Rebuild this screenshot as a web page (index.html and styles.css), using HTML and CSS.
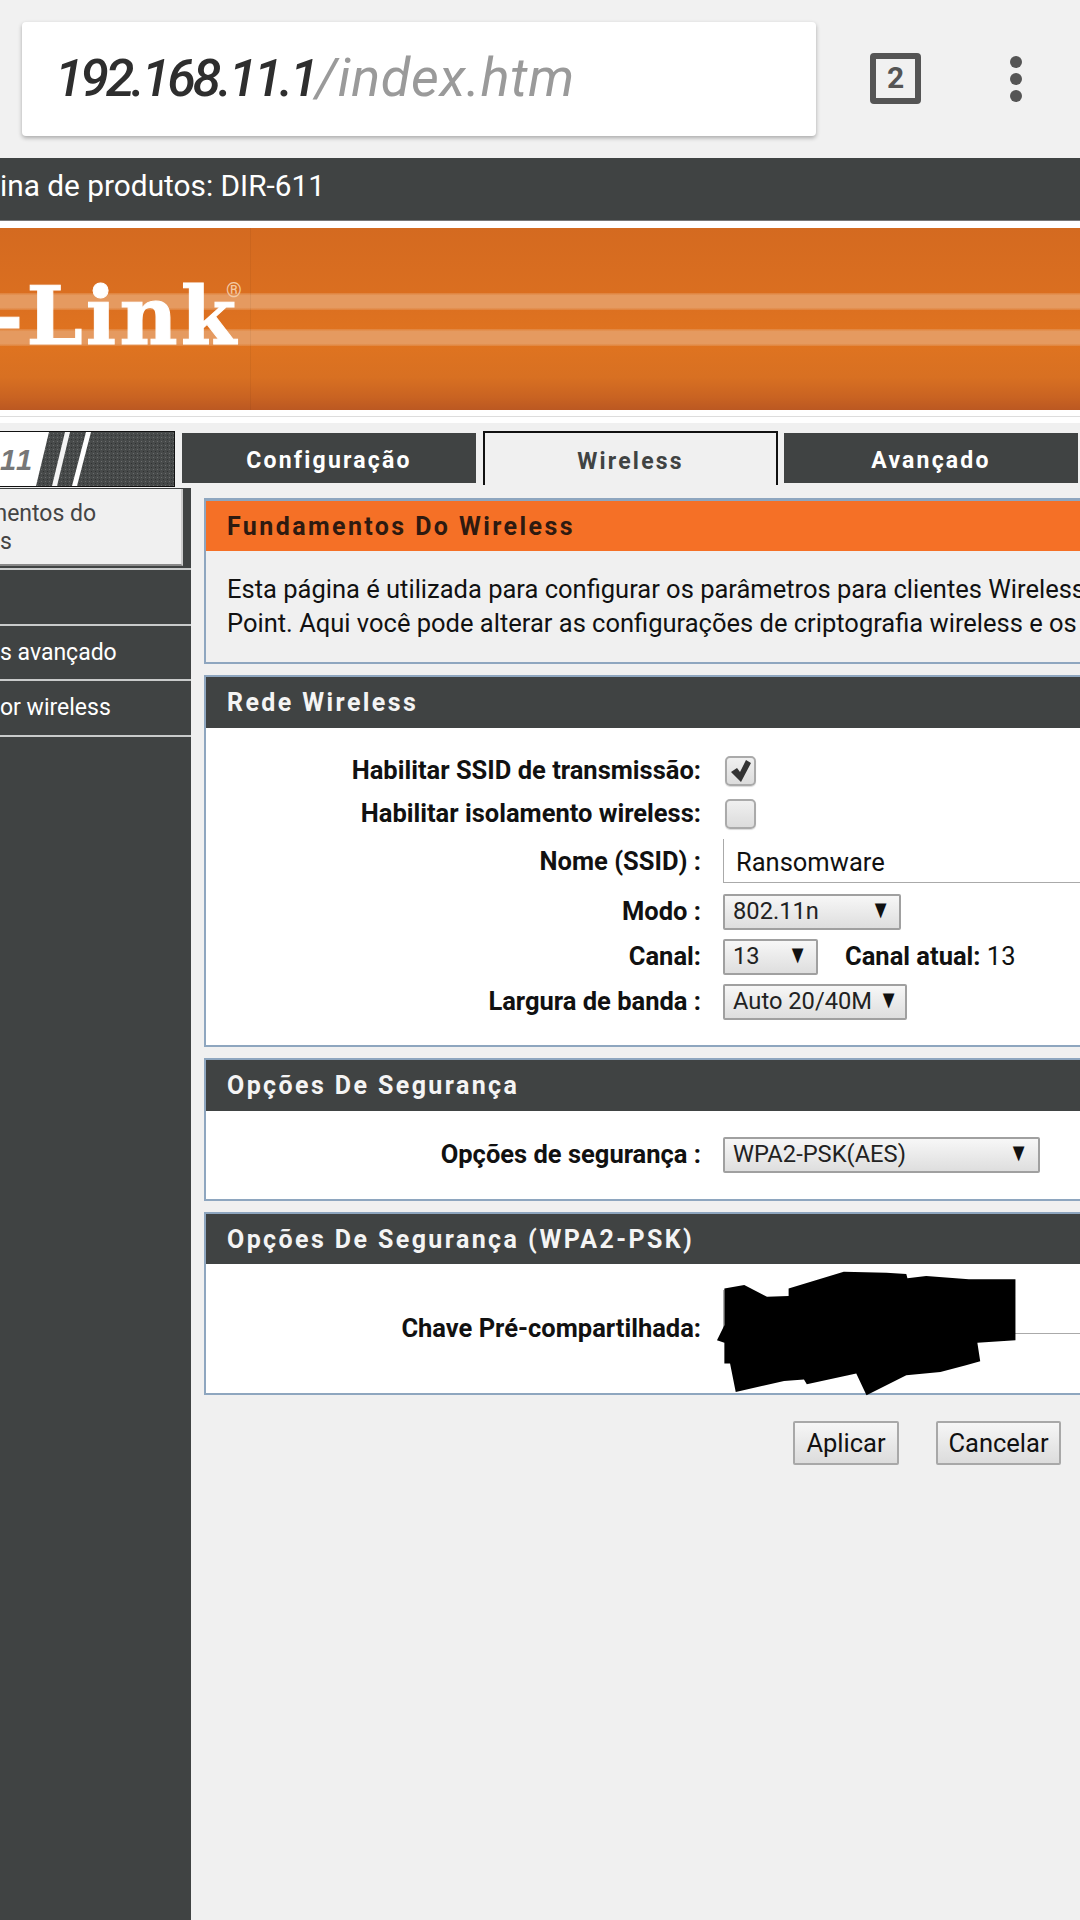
FILE: index.html
```html
<!DOCTYPE html>
<html lang="pt">
<head>
<meta charset="utf-8">
<title>192.168.11.1/index.htm</title>
<link rel="stylesheet" href="styles.css">
</head>
<body>
<header class="chrome">
  <div class="urlbox"><span class="host">192.168.11.1</span><span class="path">/index.htm</span></div>
  <div class="tabcount">2</div>
  <div class="dots"><i></i><i></i><i></i></div>
</header>
<div class="product"><span class="product-text">ina de produtos: DIR-611</span></div>
<div class="banner">
  <div class="orange">
    <div class="stripe stripe-a"></div>
    <div class="stripe stripe-b"></div>
    <div class="divider"></div>
    <div class="logo">-Link</div>
    <div class="reg">®</div>
  </div>
  <div class="rule"></div>
</div>
<nav class="tabs">
  <div class="tile">
    <svg class="tile-art" width="174" height="54" viewBox="0 0 174 54">
      <defs>
        <pattern id="grain" width="4" height="4" patternUnits="userSpaceOnUse">
          <rect width="4" height="4" fill="#474a4a"/>
          <rect width="1" height="1" x="1" y="1" fill="#6a6c6c"/>
          <rect width="1" height="1" x="3" y="3" fill="#2f3131"/>
        </pattern>
      </defs>
      <rect width="174" height="54" fill="url(#grain)"/>
      <polygon points="0,0 49,0 36,54 0,54" fill="#fff"/>
      <polygon points="65,0 70,0 57,54 52,54" fill="#f4f4f4"/>
      <polygon points="86,0 91,0 77,54 72,54" fill="#fff"/>
    </svg>
    <span class="tile-text">11</span>
  </div>
  <div class="tab">Configuração</div>
  <div class="tab tab-active">Wireless</div>
  <div class="tab">Avançado</div>
</nav>
<main class="main">
  <aside class="sidebar">
    <div class="side-item side-active"><span class="side-text">mentos do<br>s</span></div>
    <div class="side-item"></div>
    <div class="side-item"><span class="side-text">s avançado</span></div>
    <div class="side-item"><span class="side-text">or wireless</span></div>
  </aside>
  <div class="content">
    <section class="panel panel-intro">
      <h2 class="panel-head head-orange">Fundamentos Do Wireless</h2>
      <p class="intro">Esta página é utilizada para configurar os parâmetros para clientes Wireless<br>Point. Aqui você pode alterar as configurações de criptografia wireless e os</p>
    </section>
    <section class="panel">
      <h2 class="panel-head">Rede Wireless</h2>
      <div class="panel-body body-rede">
        <div class="row row-check"><label class="label">Habilitar SSID de transmissão:</label>
          <span class="check"><svg width="22" height="24" viewBox="0 0 22 24"><path d="M1 13l6-4 3 4 6-12 5 3-10 19z" fill="#333"/></svg></span></div>
        <div class="row row-check"><label class="label">Habilitar isolamento wireless:</label><span class="check"></span></div>
        <div class="row row-input"><label class="label">Nome (SSID) :</label><div class="textinput">Ransomware</div></div>
        <div class="row"><label class="label">Modo :</label><div class="select sel-modo"><span>802.11n</span><span class="arrow">▼</span></div></div>
        <div class="row"><label class="label">Canal:</label><div class="select sel-canal"><span>13</span><span class="arrow">▼</span></div>
          <span class="current"><b>Canal atual:</b> 13</span></div>
        <div class="row"><label class="label">Largura de banda :</label><div class="select sel-banda"><span>Auto 20/40M</span><span class="arrow">▼</span></div></div>
      </div>
    </section>
    <section class="panel">
      <h2 class="panel-head">Opções De Segurança</h2>
      <div class="panel-body">
        <div class="row"><label class="label">Opções de segurança :</label><div class="select sel-seg"><span>WPA2-PSK(AES)</span><span class="arrow">▼</span></div></div>
      </div>
    </section>
    <section class="panel">
      <h2 class="panel-head head-short">Opções De Segurança (WPA2-PSK)</h2>
      <div class="panel-body body-key">
        <div class="row row-key"><label class="label">Chave Pré-compartilhada:</label><div class="textinput"></div>
          <svg class="redact" width="307" height="127" viewBox="920 660 540 380" preserveAspectRatio="none"><polygon points="940,715 975,705 1015,740 1053,738 1053,715 1150,665 1225,668 1260,672 1262,685 1295,678 1370,688 1452,688 1452,870 1385,878 1390,933 1365,945 1320,965 1260,975 1190,1035 1172,970 1085,1002 1080,988 1045,992 960,1025 950,940 940,940 940,878 927,870 940,825"/></svg>
        </div>
      </div>
    </section>
    <div class="actions"><button class="btn btn-apply">Aplicar</button><button class="btn btn-cancel">Cancelar</button></div>
  </div>
</main>
</body>
</html>
```
FILE: styles.css
```css
* { box-sizing: border-box; }
html, body { margin: 0; padding: 0; }
body { width: 1080px; height: 1920px; overflow: hidden; background: #f0f0f0; font-family: Roboto, "Liberation Sans", sans-serif; color: #111; }

.chrome { height: 158px; background: #f1f1f1; padding: 22px 0 0 22px; display: flex; align-items: flex-start; }
.urlbox { width: 794px; height: 114px; background: #fff; border-radius: 4px; box-shadow: 0 2px 4px rgba(0,0,0,.3); padding: 0 0 0 33px; font-style: italic; font-size: 52px; line-height: 112px; white-space: nowrap; }
.host { color: #2e2e2e; font-weight: 500; letter-spacing: -3.3px; }
.path { color: #9a9a9a; font-weight: 400; font-size: 54px; letter-spacing: .7px; }
.tabcount { width: 51px; height: 51px; margin: 31px 0 0 54px; border: 6px solid #555; border-radius: 4px; color: #555; font-size: 30px; font-weight: 700; text-align: center; line-height: 38px; }
.dots { margin: 34px 0 0 89px; display: flex; flex-direction: column; gap: 5px; }
.dots i { display: block; width: 12px; height: 12px; border-radius: 50%; background: #555; }

.product { height: 63px; background: #404343; color: #fff; white-space: nowrap; border-bottom: 1px solid #777; }
.product-text { display: block; font-size: 29.8px; line-height: 56px; }

.banner { height: 202px; background: #fff; padding-top: 7px; }
.orange { position: relative; height: 182px; overflow: hidden; background: linear-gradient(#d46a20 0, #db6f20 40%, #e07420 62%, #d87022 82%, #c96322 93%, #bb5822 100%); }
.rule { height: 1px; margin-top: 6px; background: #ddd; }
.stripe { position: absolute; left: 0; right: 0; height: 17px; background: linear-gradient(rgba(229,154,96,.4), #e59a60 15%, #e59a60 85%, rgba(229,154,96,.4)); }
.stripe-a { top: 65px; }
.stripe-b { top: 101px; }
.divider { position: absolute; left: 250px; top: 0; bottom: 0; width: 1px; background: rgba(0,0,0,.05); }
.logo { position: absolute; left: -10px; top: 28px; font-family: "DejaVu Serif", serif; font-weight: 700; font-size: 80px; line-height: 120px; color: #fff; white-space: nowrap; letter-spacing: 3.2px; -webkit-text-stroke: 1px #fff; }
.reg { position: absolute; left: 226px; top: 52px; font-size: 20px; line-height: 20px; color: #f3c9a5; }

.tabs { display: flex; align-items: flex-start; height: 57px; margin-top: 8px; }
.tile { position: relative; width: 175px; height: 56px; border: 1px solid #111; border-left: 0; overflow: hidden; flex: none; }
.tile-art { display: block; }
.tile-text { position: absolute; left: 0; top: 12px; font-family: "Liberation Sans", sans-serif; font-style: italic; font-weight: 700; font-size: 29px; letter-spacing: 2px; color: #777; }
.tab { width: 294px; height: 50px; padding-top: 3px; margin: 2px 0 0 7px; flex: none; background: #404343; color: #fff; font-weight: 700; font-size: 23px; letter-spacing: 2.2px; text-align: center; line-height: 50px; }
.tab-active { width: 295px; height: 54px; padding-top: 3px; margin: 0 0 0 7px; background: #f0f0f0; color: #404343; border: 2px solid #111; border-bottom: 0; line-height: 52px; }
.tab:last-child { margin-left: 6px; }

.main { display: flex; align-items: flex-start; height: 1432px; }
.sidebar { width: 191px; height: 100%; flex: none; background: #404343; overflow: hidden; }
.side-item { height: 56px; border-bottom: 2px solid #c9cbcb; color: #fff; font-size: 23px; line-height: 54px; white-space: nowrap; }
.side-item:nth-child(3) { height: 55px; }
.side-text { display: block; }
.side-active { height: 82px; padding: 1px 8px 2px 0; }
.side-active .side-text { height: 77px; padding-top: 11px; background: #f0f0f0; color: #444; line-height: 28px; text-indent: -13px; border-bottom: 2px solid #888; border-right: 2px solid #ccc; }

.content { width: 900px; flex: none; margin-left: 13px; padding-top: 10px; overflow: hidden; }
.panel { border: 2px solid #8ea6bf; border-right: 0; background: #fff; margin-bottom: 11px; }
.panel-intro { background: #f0f0f0; border-top-width: 3px; }
.panel-head { margin: 0; height: 51px; padding-left: 21px; background: #404343; color: #f4f4f4; font-size: 25px; font-weight: 700; letter-spacing: 2.4px; line-height: 51px; white-space: nowrap; }
.head-orange { height: 50px; line-height: 51px; background: #f57026; color: #2e1a10; }
.head-short { height: 50px; }
.intro { margin: 0; padding: 21px 0 0 21px; height: 111px; font-size: 25.5px; line-height: 34px; white-space: nowrap; }

.panel-body { padding: 26px 0; }
.body-rede { padding-bottom: 25px; }
.row { display: grid; grid-template-columns: 495px auto auto 1fr; column-gap: 22px; align-items: center; margin-top: 9px; position: relative; }
.row:first-child { margin-top: 0; }
.label { text-align: right; font-weight: 700; font-size: 25.5px; white-space: nowrap; padding-bottom: 2px; }
.row-check { height: 34px; }
.check { display: flex; align-items: center; justify-content: center; width: 31px; height: 30px; margin-left: 2px; border: 2px solid #aaa; border-radius: 5px; background: linear-gradient(#f0f0f0, #dcdcdc); box-shadow: 0 1px 1px rgba(0,0,0,.15); }
.row-input { height: 44px; margin-top: 8px; margin-bottom: 11px; }
.row-input .label { padding-bottom: 0; }
.textinput { width: 377px; height: 44px; border-left: 1px solid #aaa; border-bottom: 1px solid #aaa; padding-left: 12px; font-size: 25.5px; line-height: 46px; grid-column: 2 / 5; }
.select { display: flex; justify-content: space-between; align-items: center; height: 36px; padding: 0 9px 2px 8px; border: 2px solid #a0a0a0; border-radius: 2px; background: linear-gradient(#f7f7f7, #dedede); font-size: 23.7px; color: #222; white-space: nowrap; }
.arrow { display: block; font-size: 17px; line-height: 20px; font-family: "DejaVu Sans", sans-serif; color: #111; transform: scale(.9, 1.15); position: relative; top: -2px; }
.sel-modo { width: 178px; padding-right: 12px; }
.sel-canal { width: 95px; padding-right: 12px; }
.sel-banda { width: 184px; padding-right: 10px; }
.sel-seg { width: 317px; padding-right: 13px; }
.current { font-size: 25.5px; margin-left: 5px; padding-bottom: 2px; }
.current b { font-weight: 700; }
.body-key { padding: 26px 0 50px; }
.row-key { align-items: start; }
.row-key .label { margin-top: 23px; line-height: 30px; padding-bottom: 0; }
.row-key .textinput { width: 400px; }
.redact { position: absolute; left: 507px; top: -20px; display: block; fill: #000; }

.actions { display: flex; gap: 37px; justify-content: flex-end; width: 857px; margin-top: 26px; }
.btn { height: 44px; padding: 0; border: 2px solid #a8a8a8; border-radius: 2px; background: linear-gradient(#f6f6f6, #dcdcdc); font-family: Roboto, sans-serif; font-size: 25.5px; color: #111; }
.btn-apply { width: 106px; }
.btn-cancel { width: 125px; }
```
